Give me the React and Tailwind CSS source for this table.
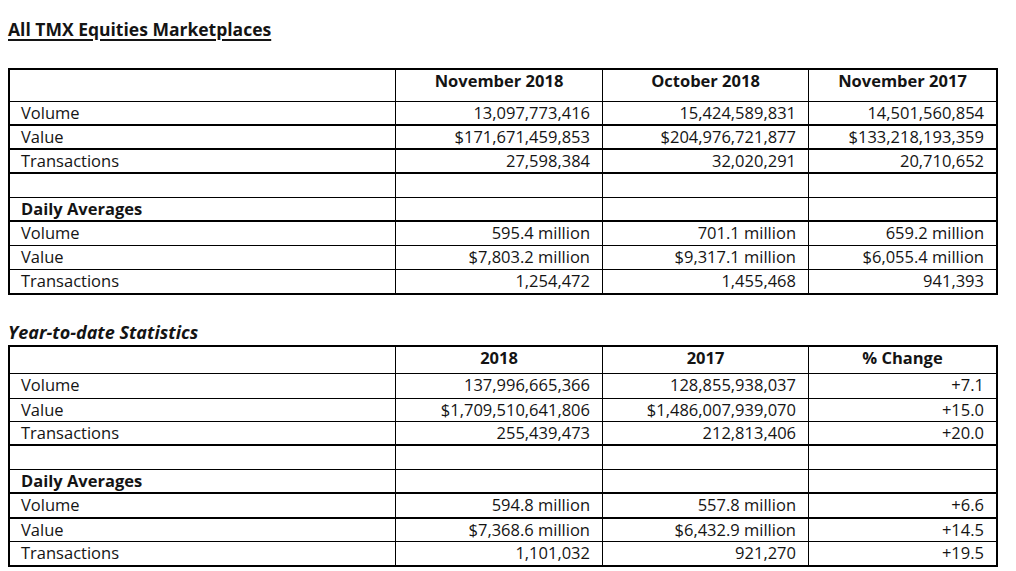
import React from "react";

const FONT = "font-['Open_Sans','Noto_Sans',sans-serif]";

function Table({ rows }) {
  return (
    <div className="ml-[8px] w-[990px] border-2 border-black">
      {rows.map((r, i) => (
        <div
          key={i}
          className={`grid grid-cols-[385px_207px_206px_188px] border-black ${r.h} ${r.b}`}
        >
          {r.cells.map((c, j) => (
            <div
              key={j}
              className={
                j === 0
                  ? `pl-[11px] leading-[22px] ${r.labelBold ? "font-bold" : ""}`
                  : r.header
                  ? "border-l border-black text-center font-bold leading-[22px]"
                  : "border-l border-black pr-[12px] text-right leading-[22px]"
              }
            >
              {c}
            </div>
          ))}
        </div>
      ))}
    </div>
  );
}

const t1 = [
  { h: "h-[32px]", b: "border-b", header: true, cells: ["", "November 2018", "October 2018", "November 2017"] },
  { h: "h-[24px]", b: "border-b-2", cells: ["Volume", "13,097,773,416", "15,424,589,831", "14,501,560,854"] },
  { h: "h-[24px]", b: "border-b-2", cells: ["Value", "$171,671,459,853", "$204,976,721,877", "$133,218,193,359"] },
  { h: "h-[24px]", b: "border-b-2", cells: ["Transactions", "27,598,384", "32,020,291", "20,710,652"] },
  { h: "h-[24px]", b: "border-b", cells: ["", "", "", ""] },
  { h: "h-[24px]", b: "border-b-2", labelBold: true, cells: ["Daily Averages", "", "", ""] },
  { h: "h-[24px]", b: "border-b", cells: ["Volume", "595.4 million", "701.1 million", "659.2 million"] },
  { h: "h-[24px]", b: "border-b", cells: ["Value", "$7,803.2 million", "$9,317.1 million", "$6,055.4 million"] },
  { h: "h-[23px]", b: "", cells: ["Transactions", "1,254,472", "1,455,468", "941,393"] },
];

const t2 = [
  { h: "h-[27px]", b: "border-b", header: true, cells: ["", "2018", "2017", "% Change"] },
  { h: "h-[25px]", b: "border-b", cells: ["Volume", "137,996,665,366", "128,855,938,037", "+7.1"] },
  { h: "h-[23px]", b: "border-b", cells: ["Value", "$1,709,510,641,806", "$1,486,007,939,070", "+15.0"] },
  { h: "h-[24px]", b: "border-b-2", cells: ["Transactions", "255,439,473", "212,813,406", "+20.0"] },
  { h: "h-[24px]", b: "border-b", cells: ["", "", "", ""] },
  { h: "h-[24px]", b: "border-b-2", labelBold: true, cells: ["Daily Averages", "", "", ""] },
  { h: "h-[25px]", b: "border-b-2", cells: ["Volume", "594.8 million", "557.8 million", "+6.6"] },
  { h: "h-[23px]", b: "border-b", cells: ["Value", "$7,368.6 million", "$6,432.9 million", "+14.5"] },
  { h: "h-[23px]", b: "", cells: ["Transactions", "1,101,032", "921,270", "+19.5"] },
];

export default function App() {
  return (
    <div className={`w-[1016px] h-[571px] overflow-hidden bg-white text-[#141414] text-[16.5px] ${FONT}`}>
      <div className="pt-[17px] pl-[8px] leading-[24px]">
        <span className="text-[17.5px] font-bold underline decoration-[2px] underline-offset-[3px]">
          All TMX Equities Marketplaces
        </span>
      </div>
      <div className="mt-[26px]">
        <Table rows={t1} />
      </div>
      <div className="mt-[26px] pl-[8px] leading-[22px] text-[18px] font-bold italic">Year-to-date Statistics</div>
      <div className="mt-[2px]">
        <Table rows={t2} />
      </div>
    </div>
  );
}
